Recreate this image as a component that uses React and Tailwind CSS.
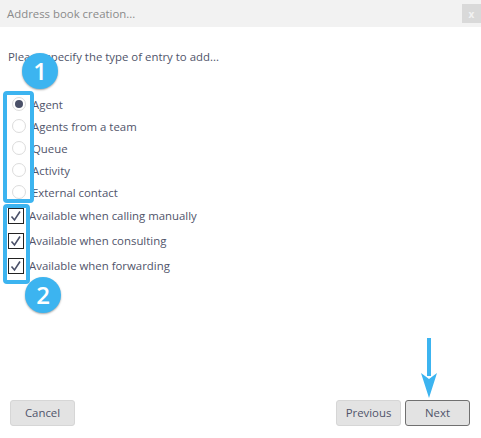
import React from "react";

const font = { fontFamily: '"Open Sans", "Noto Sans", sans-serif' };

function Radio({ label, checked }) {
  return (
    <div className="flex items-center h-[22px]">
      <span className="ml-[12px] mb-[2px] w-[14px] h-[14px] rounded-full border border-[#dcdcdc] bg-white flex items-center justify-center shrink-0">
        {checked && <span className="w-[8px] h-[8px] rounded-full bg-[#4a5068]" />}
      </span>
      <span className="ml-[6px] text-[11.4px] text-[#50546a]">{label}</span>
    </div>
  );
}

function Check({ label }) {
  return (
    <div className="flex items-center h-[25px]">
      <span className="ml-[8px] w-[16px] h-[16px] border border-[#222] bg-white flex items-center justify-center shrink-0">
        <svg width="12" height="12" viewBox="0 0 12 12" fill="none">
          <path d="M1.5 6.5 L4.5 10 L10 1.5" stroke="#4a5068" strokeWidth="1.6" />
        </svg>
      </span>
      <span className="ml-[5px] text-[11.4px] text-[#50546a]">{label}</span>
    </div>
  );
}

function Btn({ children, strong, w }) {
  return (
    <button
      className={`h-[26px] rounded-[3px] bg-[#e3e3e3] text-[11.4px] text-[#50546a] border ${strong ? "border-[#707070]" : "border-[#d6d6d6]"} ${w}`}
    >
      {children}
    </button>
  );
}

function Badge({ children, className }) {
  return (
    <div
      className={`absolute w-[36px] h-[36px] rounded-full bg-[#3cb4f0] text-white text-[24px] font-semibold flex items-center justify-center shadow-[0_1px_2px_rgba(0,0,0,0.35)] ${className}`}
    >
      {children}
    </div>
  );
}

export default function App() {
  return (
    <div className="relative w-[481px] h-[438px] bg-white flex flex-col overflow-hidden" style={font}>
      <div className="h-[27px] bg-[#f2f2f2] flex items-center justify-between shrink-0">
        <span className="ml-[7px] text-[11.4px] text-[#8a8a8a]">Address book creation...</span>
        <span className="w-[19px] h-[19px] bg-[#d9d9d9] flex items-center justify-center text-[10px] font-bold text-[#f2f2f2] leading-none">x</span>
      </div>

      <p className="ml-[8px] mt-[21px] text-[11.4px] leading-[18px] text-[#50546a]">
        Please specify the type of entry to add...
      </p>

      <div className="mt-[28px] flex flex-col">
        <Radio label="Agent" checked />
        <Radio label="Agents from a team" />
        <Radio label="Queue" />
        <Radio label="Activity" />
        <Radio label="External contact" />
      </div>
      <div className="mt-[-1px] flex flex-col">
        <Check label="Available when calling manually" />
        <Check label="Available when consulting" />
        <Check label="Available when forwarding" />
      </div>

      <div className="mt-auto mb-[12px] flex items-center px-[10px]">
        <Btn w="w-[65px]">Cancel</Btn>
        <div className="ml-auto flex gap-[4px] mr-[1px]">
          <Btn w="w-[65px]">Previous</Btn>
          <Btn w="w-[65px]" strong>Next</Btn>
        </div>
      </div>

      {/* annotations */}
      <div className="absolute left-[3px] top-[91px] w-[31px] h-[112px] rounded-[4px] border-[4px] border-[#3cb4f0]" />
      <div className="absolute left-[3px] top-[204px] w-[27px] h-[80px] rounded-[4px] border-[4px] border-[#3cb4f0]" />
      <Badge className="left-[22px] top-[53px]">1</Badge>
      <Badge className="left-[25px] top-[277px]">2</Badge>
      <svg className="absolute left-[420px] top-[337px]" width="20" height="62" viewBox="0 0 20 62">
        <rect x="7" y="1" width="4" height="38" fill="#3cb4f0" />
        <path d="M1 36 L9 42 L17 36 L9 61 Z" fill="#3cb4f0" />
      </svg>
    </div>
  );
}
